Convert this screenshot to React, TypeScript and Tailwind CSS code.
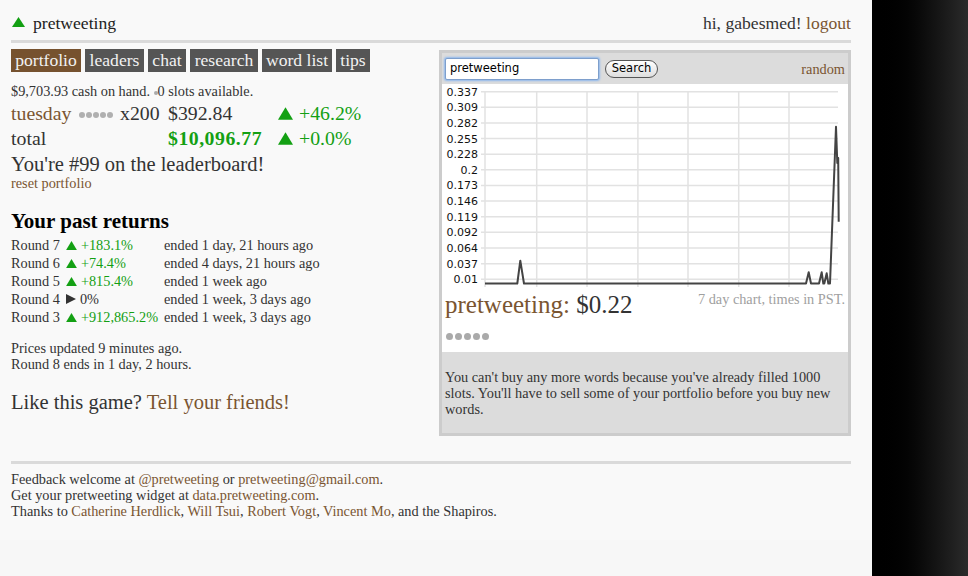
import React from 'react'

const BROWN = 'text-[#7a5531]'

function Up({ w = 11, h = 9 }: { w?: number; h?: number }) {
  return (
    <svg width={w} height={h} viewBox="0 0 12 10" className="inline-block">
      <polygon points="6,0 12,10 0,10" fill="#13a013" />
    </svg>
  )
}

function Right() {
  return (
    <svg width={10} height={10} viewBox="0 0 10 10" className="inline-block">
      <polygon points="0,0 10,5 0,10" fill="#333" />
    </svg>
  )
}

function Dots({ size, gap, color }: { size: number; gap: number; color: string }) {
  return (
    <span className="inline-flex items-center" style={{ gap }}>
      {[0, 1, 2, 3, 4].map((i) => (
        <span key={i} className="rounded-full" style={{ width: size, height: size, background: color }} />
      ))}
    </span>
  )
}

const tabs = [
  { label: 'portfolio', w: 'w-[70px]', active: true },
  { label: 'leaders', w: 'w-[59px]' },
  { label: 'chat', w: 'w-[38px]' },
  { label: 'research', w: 'w-[68px]' },
  { label: 'word list', w: 'w-[70px]' },
  { label: 'tips', w: 'w-[34px]' },
]

const rounds = [
  { n: 7, pct: '+183.1%', up: true, ended: 'ended 1 day, 21 hours ago' },
  { n: 6, pct: '+74.4%', up: true, ended: 'ended 4 days, 21 hours ago' },
  { n: 5, pct: '+815.4%', up: true, ended: 'ended 1 week ago' },
  { n: 4, pct: '0%', up: false, ended: 'ended 1 week, 3 days ago' },
  { n: 3, pct: '+912,865.2%', up: true, ended: 'ended 1 week, 3 days ago' },
]

const yLabels = ['0.337', '0.309', '0.282', '0.255', '0.228', '0.2', '0.173', '0.146', '0.119', '0.092', '0.064', '0.037', '0.01']
const vLines = [94.7, 145, 195.9, 246, 296.7, 347]

const linePts = [
  [43, 199.5], [75.3, 199.5], [78.3, 176.7], [82, 199.5],
  [364, 199.5], [366.7, 188.3], [369, 199.5],
  [377, 199.5], [379.7, 188.3], [381.3, 199.5],
  [382.3, 199.5], [384.7, 189.3], [386.3, 199.5],
  [388, 199.5], [394, 42.7], [395.3, 79], [396.2, 74], [396.7, 137.7],
]

function Chart() {
  return (
    <svg width={406} height={207} className="block">
      {yLabels.map((l, i) => {
        const y = 7.7 + 15.63 * i
        return (
          <g key={l}>
            <line x1={39} x2={396} y1={y} y2={y} stroke="#e2e2e2" strokeWidth={1.5} />
            <text x={36} y={y + 4} textAnchor="end" fontSize={11} fontFamily="DejaVu Sans, sans-serif" fill="#111">
              {l}
            </text>
          </g>
        )
      })}
      <line x1={43} x2={43} y1={7.7} y2={203} stroke="#e2e2e2" strokeWidth={1.5} />
      {vLines.map((x) => (
        <line key={x} x1={x} x2={x} y1={7.7} y2={203} stroke="#e2e2e2" strokeWidth={1.5} />
      ))}
      <polyline
        points={linePts.map((p) => p.join(',')).join(' ')}
        fill="none"
        stroke="#444"
        strokeWidth={2}
        strokeLinejoin="round"
      />
    </svg>
  )
}

export default function App() {
  return (
    <div className="flex h-[576px] w-[968px] overflow-hidden font-['Liberation_Serif',serif] text-[#333]">
      <div className="flex w-[872px] flex-col bg-[#f9f9f9]">
        <div className="ml-[11px] w-[840px]">
          {/* header */}
          <div className="flex h-[40px] items-start justify-between pt-[13px] text-[17.6px] leading-[20px]">
            <div className="flex items-center gap-[8px] pl-[1px]">
              <svg width={13} height={10} viewBox="0 0 13 10" className="mt-[-2px]">
                <polygon points="6.5,0 13,10 0,10" fill="#13a013" />
              </svg>
              <span className="text-[#222]">pretweeting</span>
            </div>
            <div>
              hi, gabesmed! <span className={BROWN}>logout</span>
            </div>
          </div>
          <div className="h-[3px] bg-[#dadada]" />

          <div className="mt-[6px] flex justify-between">
            {/* left column */}
            <div className="w-[420px]">
              <div className="flex gap-[4px]">
                {tabs.map((t) => (
                  <div
                    key={t.label}
                    className={`${t.w} h-[23px] text-center text-[17.6px] leading-[22px] text-[#f2f2f2] ${
                      t.active ? 'bg-[#76522f]' : 'bg-[#555555]'
                    }`}
                  >
                    {t.label}
                  </div>
                ))}
              </div>

              <div className="mt-[11px] text-[14.3px] leading-[16px]">
                $9,703.93 cash on hand. <span className="inline-block h-[4px] w-[4px] rounded-full bg-[#aaa] align-middle" />0 slots available.
              </div>

              <div className="mt-[2px] grid grid-cols-[109px_48px_110px_auto] text-[19.8px] leading-[25px]">
                <div className="flex items-center">
                  <span className={BROWN}>tuesday</span>
                  <span className="ml-[8px] mt-[3px] flex">
                    <Dots size={5.5} gap={1.5} color="#b0b0b0" />
                  </span>
                </div>
                <div>x200</div>
                <div>$392.84</div>
                <div className="flex items-center text-[#13a013]">
                  <Up w={15} h={13} />
                  <span className="ml-[6px]">+46.2%</span>
                </div>
                <div>total</div>
                <div />
                <div className="font-bold tracking-[0.5px] text-[#13a013]">$10,096.77</div>
                <div className="flex items-center text-[#13a013]">
                  <Up w={15} h={13} />
                  <span className="ml-[6px]">+0.0%</span>
                </div>
              </div>

              <div className="mt-[2px] text-[20.5px] leading-[22px]">You're #99 on the leaderboard!</div>
              <div className={`text-[14.3px] leading-[16px] ${BROWN}`}>reset portfolio</div>

              <div className="mt-[17px] text-[21px] font-bold leading-[26px] text-black">Your past returns</div>
              <div className="mt-[2px] grid grid-cols-[153px_auto] text-[14.3px] leading-[18px]">
                {rounds.map((r) => (
                  <React.Fragment key={r.n}>
                    <div className="flex items-center">
                      <span>Round {r.n}</span>
                      <span className="ml-[6px] mr-[4px] flex">{r.up ? <Up /> : <Right />}</span>
                      <span className={r.up ? 'text-[#13a013]' : ''}>{r.pct}</span>
                    </div>
                    <div>{r.ended}</div>
                  </React.Fragment>
                ))}
              </div>

              <div className="mt-[14px] text-[14.3px] leading-[16px]">
                <div>Prices updated 9 minutes ago.</div>
                <div>Round 8 ends in 1 day, 2 hours.</div>
              </div>

              <div className="mt-[18px] text-[20.5px] leading-[25px]">
                Like this game? <span className={BROWN}>Tell your friends!</span>
              </div>
            </div>

            {/* right panel */}
            <div className="mt-[1px] w-[412px] border-[3px] border-[#cccccc] bg-[#dcdcdc]">
              <div className="flex h-[31px] items-center px-[3px]">
                <div className="flex h-[22px] w-[154px] items-center rounded-[2px] border border-[#7e9fcc] bg-white px-[4px] font-['DejaVu_Sans',sans-serif] text-[11.5px] text-black shadow-[0_0_2px_1px_#8db8ee]">
                  pretweeting
                </div>
                <div className="ml-[6px] flex h-[18px] w-[53px] items-center justify-center rounded-full border border-[#555] bg-linear-to-b from-white to-[#dedede] font-['DejaVu_Sans',sans-serif] text-[11.5px] text-black">
                  Search
                </div>
                <div className={`ml-auto text-[14.3px] leading-[16px] ${BROWN}`}>random</div>
              </div>

              <div className="h-[268px] bg-white">
                <Chart />
                <div className="flex items-start justify-between px-[3px]">
                  <div className="text-[25px] leading-[28px]">
                    <span className={BROWN}>pretweeting:</span> $0.22
                  </div>
                  <div className="text-[14.3px] leading-[16px] text-[#a0a0a0]">7 day chart, times in PST.</div>
                </div>
                <div className="mt-[14px] flex px-[4px]">
                  <Dots size={7} gap={2} color="#aaaaaa" />
                </div>
              </div>

              <div className="h-[81px] whitespace-nowrap px-[3px] pt-[17px] text-[14.3px] leading-[16px]">
                You can't buy any more words because you've already filled 1000
                <br />
                slots. You'll have to sell some of your portfolio before you buy new
                <br />
                words.
              </div>
            </div>
          </div>

          {/* footer */}
          <div className="mt-[25px] h-[3px] bg-[#dadada]" />
          <div className="mt-[7px] text-[14.3px] leading-[16px]">
            <div>
              Feedback welcome at <span className={BROWN}>@pretweeting</span> or{' '}
              <span className={BROWN}>pretweeting@gmail.com</span>.
            </div>
            <div>
              Get your pretweeting widget at <span className={BROWN}>data.pretweeting.com</span>.
            </div>
            <div>
              Thanks to <span className={BROWN}>Catherine Herdlick</span>, <span className={BROWN}>Will Tsui</span>,{' '}
              <span className={BROWN}>Robert Vogt</span>, <span className={BROWN}>Vincent Mo</span>, and the Shapiros.
            </div>
          </div>
        </div>
        <div className="mt-auto h-[36px] bg-[#f7f7f7]" />
      </div>
      <div className="flex-1 bg-linear-to-r from-black to-[#2b2b2b]" />
    </div>
  )
}
